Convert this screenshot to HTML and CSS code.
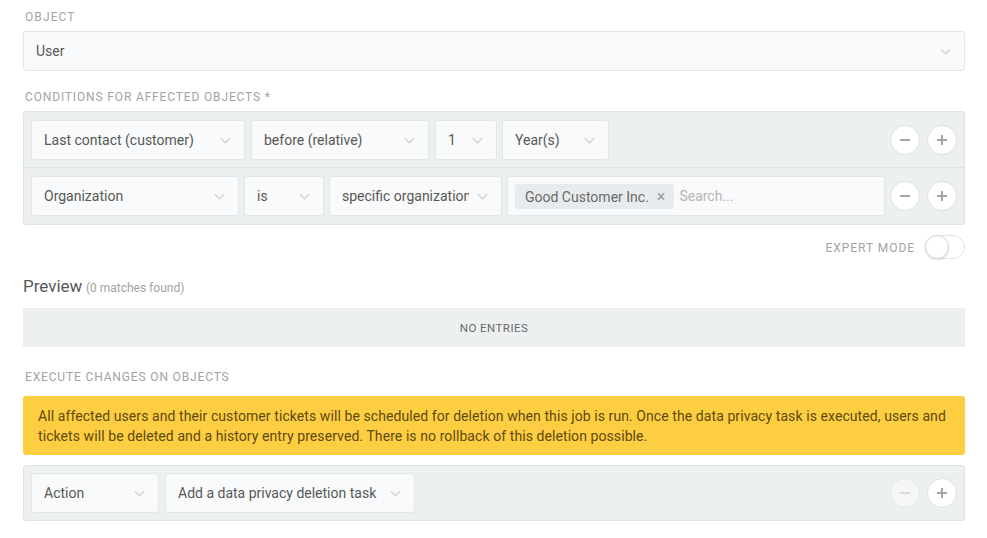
FILE: index.html
```html
<!DOCTYPE html>
<html>
<head>
<meta charset="utf-8">
<link rel="stylesheet" href="styles.css">
</head>
<body>
<div class="page">
  <div class="label first">Object</div>
  <div class="select wide"><span class="val">User</span><svg class="chev" viewBox="0 0 12 7"><path d="M1 1l5 5 5-5"/></svg></div>

  <div class="label">Conditions for affected objects *</div>
  <div class="box cond">
    <div class="row r1">
      <div class="select w214"><span class="val">Last contact (customer)</span><svg class="chev" viewBox="0 0 12 7"><path d="M1 1l5 5 5-5"/></svg></div>
      <div class="select w178"><span class="val">before (relative)</span><svg class="chev" viewBox="0 0 12 7"><path d="M1 1l5 5 5-5"/></svg></div>
      <div class="select w62"><span class="val">1</span><svg class="chev" viewBox="0 0 12 7"><path d="M1 1l5 5 5-5"/></svg></div>
      <div class="select w107"><span class="val">Year(s)</span><svg class="chev" viewBox="0 0 12 7"><path d="M1 1l5 5 5-5"/></svg></div>
      <div class="btns">
        <span class="cbtn"><svg viewBox="0 0 10 10"><path d="M0 5h10"/></svg></span>
        <span class="cbtn"><svg viewBox="0 0 10 10"><path d="M0 5h10M5 0v10"/></svg></span>
      </div>
    </div>
    <div class="row r2">
      <div class="select w208"><span class="val">Organization</span><svg class="chev" viewBox="0 0 12 7"><path d="M1 1l5 5 5-5"/></svg></div>
      <div class="select w80"><span class="val">is</span><svg class="chev" viewBox="0 0 12 7"><path d="M1 1l5 5 5-5"/></svg></div>
      <div class="select w173"><span class="val">specific organization</span><svg class="chev" viewBox="0 0 12 7"><path d="M1 1l5 5 5-5"/></svg></div>
      <div class="tokens">
        <span class="chip">Good Customer Inc.<span class="x">×</span></span>
        <span class="ph">Search...</span>
      </div>
      <div class="btns">
        <span class="cbtn"><svg viewBox="0 0 10 10"><path d="M0 5h10"/></svg></span>
        <span class="cbtn"><svg viewBox="0 0 10 10"><path d="M0 5h10M5 0v10"/></svg></span>
      </div>
    </div>
  </div>

  <div class="expert">
    <span class="elabel">Expert Mode</span>
    <span class="toggle"><span class="knob"></span></span>
  </div>

  <div class="preview"><span class="ptitle">Preview</span> <span class="pcount">(0 matches found)</span></div>
  <div class="empty">No Entries</div>

  <div class="label exec">Execute changes on objects</div>
  <div class="alert">All affected users and their customer tickets will be scheduled for deletion when this job is run. Once the data privacy task is executed, users and tickets will be deleted and a history entry preserved. There is no rollback of this deletion possible.</div>

  <div class="box action">
    <div class="row ra">
      <div class="select w128"><span class="val">Action</span><svg class="chev" viewBox="0 0 12 7"><path d="M1 1l5 5 5-5"/></svg></div>
      <div class="select w250"><span class="val">Add a data privacy deletion task</span><svg class="chev" viewBox="0 0 12 7"><path d="M1 1l5 5 5-5"/></svg></div>
      <div class="btns">
        <span class="cbtn disabled"><svg viewBox="0 0 10 10"><path d="M0 5h10"/></svg></span>
        <span class="cbtn"><svg viewBox="0 0 10 10"><path d="M0 5h10M5 0v10"/></svg></span>
      </div>
    </div>
  </div>
</div>
</body>
</html>
```

FILE: styles.css
```css
* { box-sizing: border-box; }
html, body { margin: 0; padding: 0; background: #fff; }
body {
  font-family: "Roboto", "Open Sans", "DejaVu Sans", sans-serif;
  font-size: 14px;
  color: #585856;
}
.page { padding: 9px 22px 0 23px; }

.label {
  font-size: 12px;
  line-height: 16px;
  letter-spacing: 0.85px;
  text-transform: uppercase;
  color: #a3a3a3;
  padding-left: 2px;
  margin-top: 18px;
  margin-bottom: 6px;
}
.label.first { margin-top: 0; letter-spacing: 1.1px; }

.select {
  height: 40px;
  background: #f9fafb;
  border: 1px solid #e3e6e8;
  border-radius: 3px;
  display: flex;
  align-items: center;
  padding: 0 13px 0 12px;
  flex: none;
  gap: 8px;
}
.select .val {
  flex: 1;
  min-width: 0;
  white-space: nowrap;
  overflow: hidden;
}
.select .chev {
  width: 11px;
  height: 7px;
  flex: none;
  fill: none;
  stroke: #cfd2d4;
  stroke-width: 1.4;
}
.select.wide { width: 100%; }
.w214 { width: 214px; }
.w178 { width: 178px; }
.w62 { width: 62px; }
.w107 { width: 107px; }
.w208 { width: 208px; }
.w80 { width: 80px; }
.w173 { width: 173px; }
.w128 { width: 128px; }
.w250 { width: 250px; }

.box {
  background: #edf0f1;
  border: 1px solid #dde2e4;
  border-radius: 3px;
}
.row {
  display: flex;
  align-items: center;
  gap: 5px;
  padding: 8px 7px 7px 7px;
  border-bottom: 1px solid #dde2e4;
}
.row:last-child { border-bottom: none; }
.r1 { gap: 6px; }
.r1 .w62 + .w107 { margin-left: -1px; }
.r2 { padding-bottom: 8px; }
.ra { padding: 7px; gap: 6px; }

.tokens {
  width: 378px;
  height: 40px;
  background: #f9fafb;
  border: 1px solid #e3e6e8;
  border-radius: 3px;
  display: flex;
  align-items: center;
  padding: 0 7px;
  gap: 5px;
  flex: none;
}
.chip {
  height: 25px;
  margin-top: 1px;
  background: #e8ebed;
  border-radius: 3px;
  padding: 0 9px 0 10px;
  display: flex;
  align-items: center;
  color: #6a6a6a;
  white-space: nowrap;
}
.chip .x { margin-left: 8px; color: #999; font-size: 16px; }
.ph { color: #b5b5b5; }

.btns {
  margin-left: auto;
  display: flex;
  gap: 7px;
}
.cbtn {
  width: 30px;
  height: 30px;
  border-radius: 50%;
  background: #fff;
  border: 1px solid #dde1e3;
  display: flex;
  align-items: center;
  justify-content: center;
}
.cbtn svg {
  width: 10px;
  height: 10px;
  fill: none;
  stroke: #a5a5a5;
  stroke-width: 2;
}
.cbtn.disabled { background: #f4f6f7; border-color: #e4e8ea; }
.cbtn.disabled svg { stroke: #d8dbdd; }

.expert {
  display: flex;
  justify-content: flex-end;
  align-items: center;
  margin-top: 10px;
  gap: 10px;
  height: 24px;
}
.elabel {
  font-size: 12px;
  letter-spacing: 0.95px;
  text-transform: uppercase;
  color: #a3a3a3;
  margin-top: 1px;
}
.toggle {
  width: 40px;
  height: 24px;
  border-radius: 12px;
  border: 1px solid #e3e3e3;
  background: #fff;
  position: relative;
}
.knob {
  position: absolute;
  left: -1px;
  top: -1px;
  width: 24px;
  height: 24px;
  border-radius: 50%;
  background: #fff;
  border: 1px solid #d8d8d8;
  box-shadow: 0 1px 2px rgba(0,0,0,0.12);
}

.preview {
  margin-top: 16px;
  line-height: 22px;
}
.ptitle { font-size: 17px; color: #585856; }
.pcount { font-size: 12px; color: #a3a3a3; }

.empty {
  margin-top: 9px;
  height: 39px;
  background: #edf0f1;
  display: flex;
  align-items: center;
  justify-content: center;
  font-size: 11.5px;
  letter-spacing: 0.45px;
  text-transform: uppercase;
  color: #6a6a6a;
}

.label.exec { margin-top: 22px; margin-bottom: 11px; }

.alert {
  background: #fdcd42;
  border-radius: 3px;
  padding: 10px 14px 9px 15px;
  line-height: 20px;
  letter-spacing: 0.08px;
  color: #5e4a0f;
}

.box.action { margin-top: 10px; }
```
